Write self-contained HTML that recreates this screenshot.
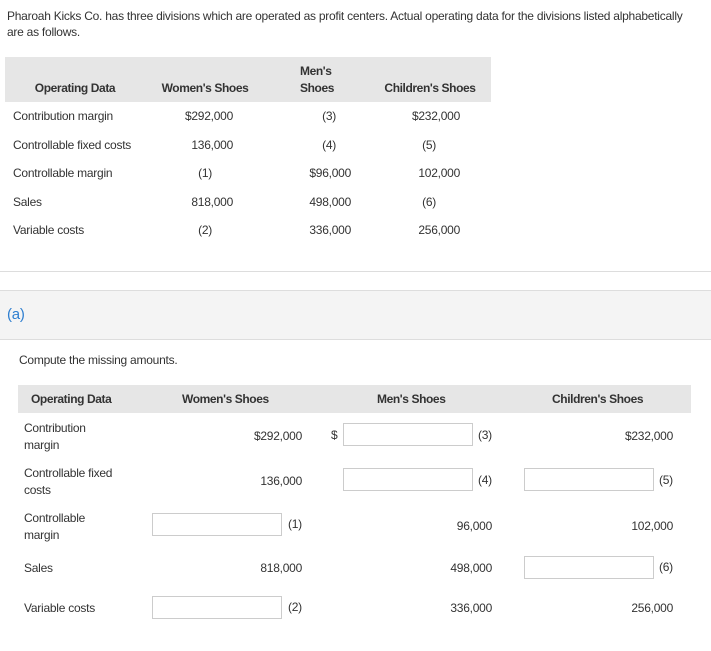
<!DOCTYPE html>
<html><head><meta charset="utf-8"><style>
body{margin:0;width:711px;height:651px;background:#fff;font-family:"Liberation Sans",sans-serif;font-size:12px;color:#333;position:relative;overflow:hidden;letter-spacing:-0.25px}
.a{position:absolute;white-space:nowrap;line-height:14px}
.r{text-align:right}
.b{font-weight:bold;letter-spacing:-0.4px}
.in{position:absolute;height:23px;border:1px solid #ccc;background:#fff;box-sizing:border-box}
</style></head><body>
<div class="a" style="left:7px;top:9px">Pharoah Kicks Co. has three divisions which are operated as profit centers. Actual operating data for the divisions listed alphabetically</div>
<div class="a" style="left:7px;top:25px">are as follows.</div>

<div style="position:absolute;left:5px;top:57px;width:486px;height:45px;background:#e6e6e6"></div>
<div class="a b" style="left:15px;top:81px;width:120px;text-align:center">Operating Data</div>
<div class="a b" style="left:125px;top:81px;width:160px;text-align:center">Women's Shoes</div>
<div class="a b" style="left:300px;top:64px">Men's</div>
<div class="a b" style="left:300px;top:81px">Shoes</div>
<div class="a b" style="left:350px;top:81px;width:160px;text-align:center">Children's Shoes</div>

<div class="a" style="left:13px;top:109px">Contribution margin</div>
<div class="a" style="left:13px;top:138px">Controllable fixed costs</div>
<div class="a" style="left:13px;top:166px">Controllable margin</div>
<div class="a" style="left:13px;top:195px">Sales</div>
<div class="a" style="left:13px;top:223px">Variable costs</div>

<div class="a r" style="right:478px;top:109px">$292,000</div>
<div class="a r" style="right:478px;top:138px">136,000</div>
<div class="a r" style="right:499px;top:166px">(1)</div>
<div class="a r" style="right:478px;top:195px">818,000</div>
<div class="a r" style="right:499px;top:223px">(2)</div>

<div class="a r" style="right:375px;top:109px">(3)</div>
<div class="a r" style="right:375px;top:138px">(4)</div>
<div class="a r" style="right:360px;top:166px">$96,000</div>
<div class="a r" style="right:360px;top:195px">498,000</div>
<div class="a r" style="right:360px;top:223px">336,000</div>

<div class="a r" style="right:251px;top:109px">$232,000</div>
<div class="a r" style="right:275px;top:138px">(5)</div>
<div class="a r" style="right:251px;top:166px">102,000</div>
<div class="a r" style="right:275px;top:195px">(6)</div>
<div class="a r" style="right:251px;top:223px">256,000</div>

<div style="position:absolute;left:0;top:271px;width:711px;height:1px;background:#ddd"></div>
<div style="position:absolute;left:0;top:290px;width:711px;height:48px;background:#f4f4f4;border-top:1px solid #ddd;border-bottom:1px solid #ddd"></div>
<div class="a" style="left:7px;top:308px;font-size:15px;color:#2f7fd0">(a)</div>

<div class="a" style="left:19px;top:353px">Compute the missing amounts.</div>

<div style="position:absolute;left:18px;top:385px;width:673px;height:28px;background:#e6e6e6"></div>
<div class="a b" style="left:31px;top:392px">Operating Data</div>
<div class="a b" style="left:182px;top:392px">Women's Shoes</div>
<div class="a b" style="left:377px;top:392px">Men's Shoes</div>
<div class="a b" style="left:552px;top:392px">Children's Shoes</div>

<div class="a" style="left:24px;top:420px;line-height:17px">Contribution<br>margin</div>
<div class="a" style="left:24px;top:465px;line-height:17px">Controllable fixed<br>costs</div>
<div class="a" style="left:24px;top:510px;line-height:17px">Controllable<br>margin</div>
<div class="a" style="left:24px;top:561px">Sales</div>
<div class="a" style="left:24px;top:601px">Variable costs</div>

<div class="a r" style="right:409px;top:429px">$292,000</div>
<div class="a r" style="right:409px;top:474px">136,000</div>
<div class="in" style="left:152px;top:513px;width:130px"></div>
<div class="a" style="left:288px;top:517px">(1)</div>
<div class="a r" style="right:409px;top:561px">818,000</div>
<div class="in" style="left:152px;top:596px;width:130px"></div>
<div class="a" style="left:288px;top:600px">(2)</div>

<div class="a" style="left:331px;top:428px">$</div>
<div class="in" style="left:343px;top:423px;width:130px"></div>
<div class="a" style="left:478px;top:428px">(3)</div>
<div class="in" style="left:343px;top:468px;width:130px"></div>
<div class="a" style="left:478px;top:473px">(4)</div>
<div class="a r" style="right:219px;top:519px">96,000</div>
<div class="a r" style="right:219px;top:561px">498,000</div>
<div class="a r" style="right:219px;top:601px">336,000</div>

<div class="a r" style="right:38px;top:429px">$232,000</div>
<div class="in" style="left:524px;top:468px;width:130px"></div>
<div class="a" style="left:659px;top:473px">(5)</div>
<div class="a r" style="right:38px;top:519px">102,000</div>
<div class="in" style="left:524px;top:556px;width:130px"></div>
<div class="a" style="left:659px;top:560px">(6)</div>
<div class="a r" style="right:38px;top:601px">256,000</div>
</body></html>
